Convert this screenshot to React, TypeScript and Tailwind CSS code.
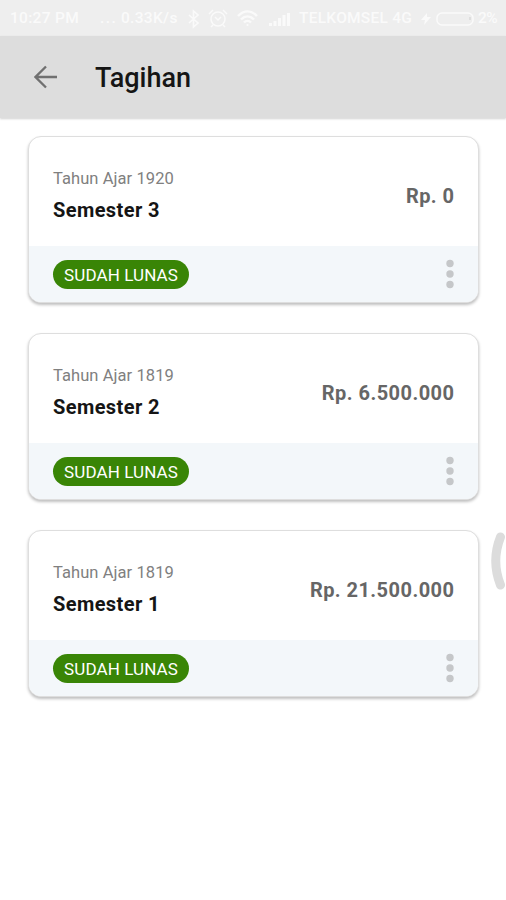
const bills = [
  { id: 1, year: 'Tahun Ajar 1920', semester: 'Semester 3', amount: 'Rp. 0' },
  { id: 2, year: 'Tahun Ajar 1819', semester: 'Semester 2', amount: 'Rp. 6.500.000' },
  { id: 3, year: 'Tahun Ajar 1819', semester: 'Semester 1', amount: 'Rp. 21.500.000' },
]

function StatusBar() {
  return (
    <div className="flex h-9 items-center bg-[#eeeeee] pt-[2px] pl-[10px] text-[15.5px] font-medium text-[#fafafa] whitespace-nowrap">
      <span className="w-[90px] shrink-0 tracking-[0.3px]">10:27 PM</span>
      <span className="w-[21px] shrink-0 tracking-[1.4px]">...</span>
      <span className="w-[66px] shrink-0 tracking-[0.3px]">0.33K/s</span>
      <svg className="h-5 w-[20px] shrink-0" viewBox="0 0 20 20" fill="none" stroke="currentColor" strokeWidth="1.6">
        <path d="M2 6l9 8-4.500 4V2L11 6l-9 8" />
      </svg>
      <svg className="h-5 w-[30px] shrink-0" viewBox="0 0 30 20" fill="none" stroke="currentColor" strokeWidth="1.5">
        <circle cx="11" cy="10" r="7" />
        <path d="M8 8l3 3 3-3M2 5l4-4M16 1l4 4M6 16l-2 2M16 16l2 2" />
      </svg>
      <svg className="h-5 w-[32px] shrink-0" viewBox="0 0 32 20" fill="none" stroke="currentColor" strokeWidth="2.4">
        <path d="M1 7c6-6 13-6 19 0M4 10.500c4-4 9-4 13 0M7 13.500c2-2 5-2 7 0" />
        <circle cx="10.500" cy="16" r="1" fill="currentColor" stroke="none" />
      </svg>
      <svg className="h-5 w-[30px] shrink-0" viewBox="0 0 30 20" fill="currentColor">
        <path d="M0 14h3v3H0zM4.500 12h3v5h-3zM9 9h3v8H9zM13.500 6h3v11h-3zM18 4h3v13h-3z" />
      </svg>
      <span className="w-[121px] shrink-0 tracking-[0.25px]">TELKOMSEL 4G</span>
      <svg className="h-5 w-[16px] shrink-0" viewBox="0 0 16 20" fill="currentColor">
        <path d="M7 4L1 11h4l-1 5 7-8H7z" />
      </svg>
      <svg className="h-5 w-[42px] shrink-0" viewBox="0 0 42 20" fill="none" stroke="currentColor" strokeWidth="1.500">
        <rect x="1" y="4" width="36" height="12" rx="5" />
        <path d="M34 8v3" stroke="#d8d8d8" />
      </svg>
      <span className="shrink-0 -tracking-[0.5px]">2%</span>
    </div>
  )
}

function Header() {
  return (
    <header className="flex h-[82px] items-center bg-[#dddddd] pl-[34px] shadow-[0_1px_2px_rgba(0,0,0,0.18)]">
      <svg className="h-[24px] w-[24px]" viewBox="0 0 24 24" fill="none" stroke="#707070" strokeWidth="2.3">
        <path d="M12 1.500L1.500 12 12 22.500M1.500 12H23" />
      </svg>
      <h1 className="ml-[37px] pt-[2px] text-[27px] leading-none font-medium text-[#151515]">Tagihan</h1>
    </header>
  )
}

function BillCard({ bill }: { bill: (typeof bills)[number] }) {
  return (
    <article className="h-[167px] overflow-hidden rounded-[13px] border border-[#dedede] bg-white shadow-[0_2px_3px_rgba(0,0,0,0.25)]">
      <div className="flex h-[109px] items-center justify-between px-6">
        <div className="pt-[10px]">
          <p className="text-[16.500px] leading-[24px] tracking-[0.07px] text-[#808080]">{bill.year}</p>
          <h2 className="mt-[3px] text-[20px] leading-[32px] font-bold tracking-[0.4px] text-[#151515]">{bill.semester}</h2>
        </div>
        <p className="-mr-[0.45px] pt-[9px] text-[20px] font-bold tracking-[0.45px] text-[#666666]">{bill.amount}</p>
      </div>
      <div className="flex h-[56px] items-center justify-between bg-[#f3f7fa] px-6">
        <span className="flex h-[29px] w-[136px] items-center justify-center rounded-full bg-[#398506] pt-[3px] text-[17px] tracking-[0.1px] text-white">
          SUDAH LUNAS
        </span>
        <svg className="h-[30px] w-[8px]" viewBox="0 0 8 30" fill="#c5c7c9">
          <circle cx="4" cy="4.500" r="3.700" />
          <circle cx="4" cy="15" r="3.700" />
          <circle cx="4" cy="25.500" r="3.700" />
        </svg>
      </div>
    </article>
  )
}

export default function App() {
  return (
    <div className="relative min-h-screen w-full overflow-hidden bg-white font-['Roboto',sans-serif]">
      <StatusBar />
      <Header />
      <main className="flex flex-col gap-[30px] pt-[18px] pr-[27px] pl-[28px]">
        {bills.map((bill) => (
          <BillCard key={bill.id} bill={bill} />
        ))}
      </main>

      {/* Edge gesture handle */}
      <svg className="absolute top-[532px] right-0 h-[58px] w-[16px]" viewBox="0 0 16 58" fill="none">
        <path d="M10.500 5Q1 29 10.500 53" stroke="#dcdcdc" strokeWidth="9" strokeLinecap="round" />
      </svg>
    </div>
  )
}
